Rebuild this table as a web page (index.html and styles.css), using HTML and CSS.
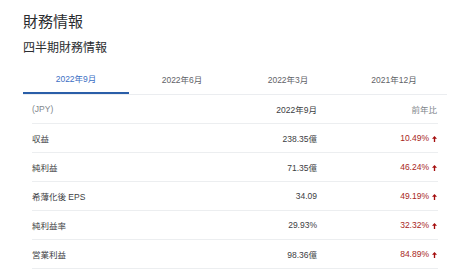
FILE: index.html
```html
<!DOCTYPE html>
<html lang="ja">
<head>
<meta charset="utf-8">
<link rel="stylesheet" href="styles.css">
</head>
<body>
<div class="page">
  <h1 class="title">財務情報</h1>
  <h2 class="subtitle">四半期財務情報</h2>
  <div class="tabs">
    <div class="tab active">2022年9月</div>
    <div class="tab">2022年6月</div>
    <div class="tab">2022年3月</div>
    <div class="tab">2021年12月</div>
  </div>
  <div class="table">
    <div class="row head">
      <div class="label muted">(JPY)</div>
      <div class="val">2022年9月</div>
      <div class="chg muted">前年比</div>
    </div>
    <div class="row">
      <div class="label">収益</div>
      <div class="val">238.35億</div>
      <div class="chg up">10.49%<svg class="arrow" viewBox="0 0 6 7"><path d="M3 0 L6 3.2 H3.8 V7 H2.2 V3.2 H0 Z"/></svg></div>
    </div>
    <div class="row">
      <div class="label">純利益</div>
      <div class="val">71.35億</div>
      <div class="chg up">46.24%<svg class="arrow" viewBox="0 0 6 7"><path d="M3 0 L6 3.2 H3.8 V7 H2.2 V3.2 H0 Z"/></svg></div>
    </div>
    <div class="row">
      <div class="label">希薄化後 EPS</div>
      <div class="val">34.09</div>
      <div class="chg up">49.19%<svg class="arrow" viewBox="0 0 6 7"><path d="M3 0 L6 3.2 H3.8 V7 H2.2 V3.2 H0 Z"/></svg></div>
    </div>
    <div class="row">
      <div class="label">純利益率</div>
      <div class="val">29.93%</div>
      <div class="chg up">32.32%<svg class="arrow" viewBox="0 0 6 7"><path d="M3 0 L6 3.2 H3.8 V7 H2.2 V3.2 H0 Z"/></svg></div>
    </div>
    <div class="row">
      <div class="label">営業利益</div>
      <div class="val">98.36億</div>
      <div class="chg up">84.89%<svg class="arrow" viewBox="0 0 6 7"><path d="M3 0 L6 3.2 H3.8 V7 H2.2 V3.2 H0 Z"/></svg></div>
    </div>
  </div>
</div>
</body>
</html>
```
FILE: styles.css
```css
html, body {
  margin: 0;
  padding: 0;
  background: #fff;
}
body {
  font-family: "Liberation Sans", Arial, "Noto Sans CJK JP", sans-serif;
  color: #3c4043;
}
.page {
  width: 424px;
  padding: 0 0 0 23px;
}
.title {
  margin: 9px 0 0;
  font-family: "Noto Sans CJK JP", sans-serif;
  font-weight: 400;
  font-size: 15px;
  line-height: 24px;
  color: #2b2d30;
}
.subtitle {
  margin: 5px 0 0;
  font-family: "Noto Sans CJK JP", sans-serif;
  font-weight: 400;
  font-size: 12px;
  line-height: 18px;
  color: #2b2d30;
}
.tabs {
  display: flex;
  margin-top: 6px;
  border-bottom: 1px solid #ebedf0;
}
.tab {
  flex: 1;
  height: 32px;
  box-sizing: border-box;
  display: flex;
  align-items: center;
  justify-content: center;
  font-size: 8.5px;
  color: #5f6368;
  padding-top: 1px;
}
.tab.active {
  color: #3c6fc4;
  border-bottom: 2px solid #2a5ea8;
  margin-bottom: -1px;
}
.table {
  margin: 0 9px;
}
.row {
  display: grid;
  grid-template-columns: 1fr 110px 121px;
  height: 29px;
  box-sizing: border-box;
  align-items: center;
  border-bottom: 1px solid #eceef0;
  font-size: 8.5px;
  color: #3c4043;
}
.val, .chg {
  text-align: right;
}
.chg {
  padding-right: 1px;
}
.muted {
  color: #80868b;
}
.up {
  color: #a8261c;
}
.arrow {
  width: 5px;
  height: 6px;
  margin-left: 3px;
  fill: #a50e0e;
  vertical-align: -0.5px;
}
```
